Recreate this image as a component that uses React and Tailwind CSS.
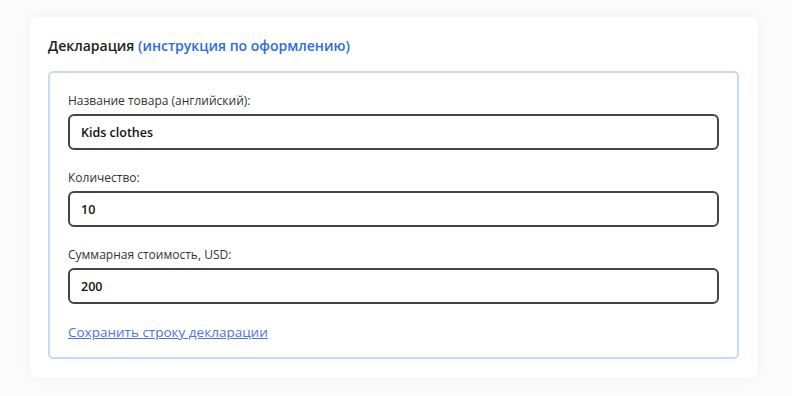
export default function App() {
  const fields = [
    { label: "Название товара (английский):", value: "Kids clothes" },
    { label: "Количество:", value: "10" },
    { label: "Суммарная стоимость, USD:", value: "200" },
  ];

  return (
    <div
      className="w-[792px] h-[396px] bg-[#fbfbfc] pt-[17px] pl-[30px]"
      style={{ fontFamily: '"Open Sans", "Liberation Sans", sans-serif' }}
    >
      <div className="w-[728px] h-[361px] bg-white rounded-lg shadow-[0_0_12px_rgba(0,0,0,0.05)] pt-[20px] px-[18px]">
        {/* HEADER */}
        <h2 className="text-[14px] font-semibold text-[#1e1e1e] leading-[18px]">
          Декларация{" "}
          <a href="#" className="text-[#2c6ae6]">
            (инструкция по оформлению)
          </a>
        </h2>

        {/* DECLARATION ROW */}
        <div className="mt-[16px] w-[691px] h-[288px] border-2 border-[#c9d8f7] rounded-[5px] px-[18px] pt-[20px]">
          {fields.map((f) => (
            <div key={f.label} className="mb-[20px]">
              <label className="block text-[12px] text-[#333] leading-[16px] mb-[5px]">
                {f.label}
              </label>
              <input
                readOnly
                value={f.value}
                className="w-full h-[36px] border-2 border-[#444] rounded-[6px] px-[11px] text-[12.5px] font-semibold text-[#111] outline-none"
              />
            </div>
          ))}

          <a
            href="#"
            className="block text-[13.5px] font-medium text-[#4e74df] underline leading-[16px]"
          >
            Сохранить строку декларации
          </a>
        </div>
      </div>
    </div>
  );
}
